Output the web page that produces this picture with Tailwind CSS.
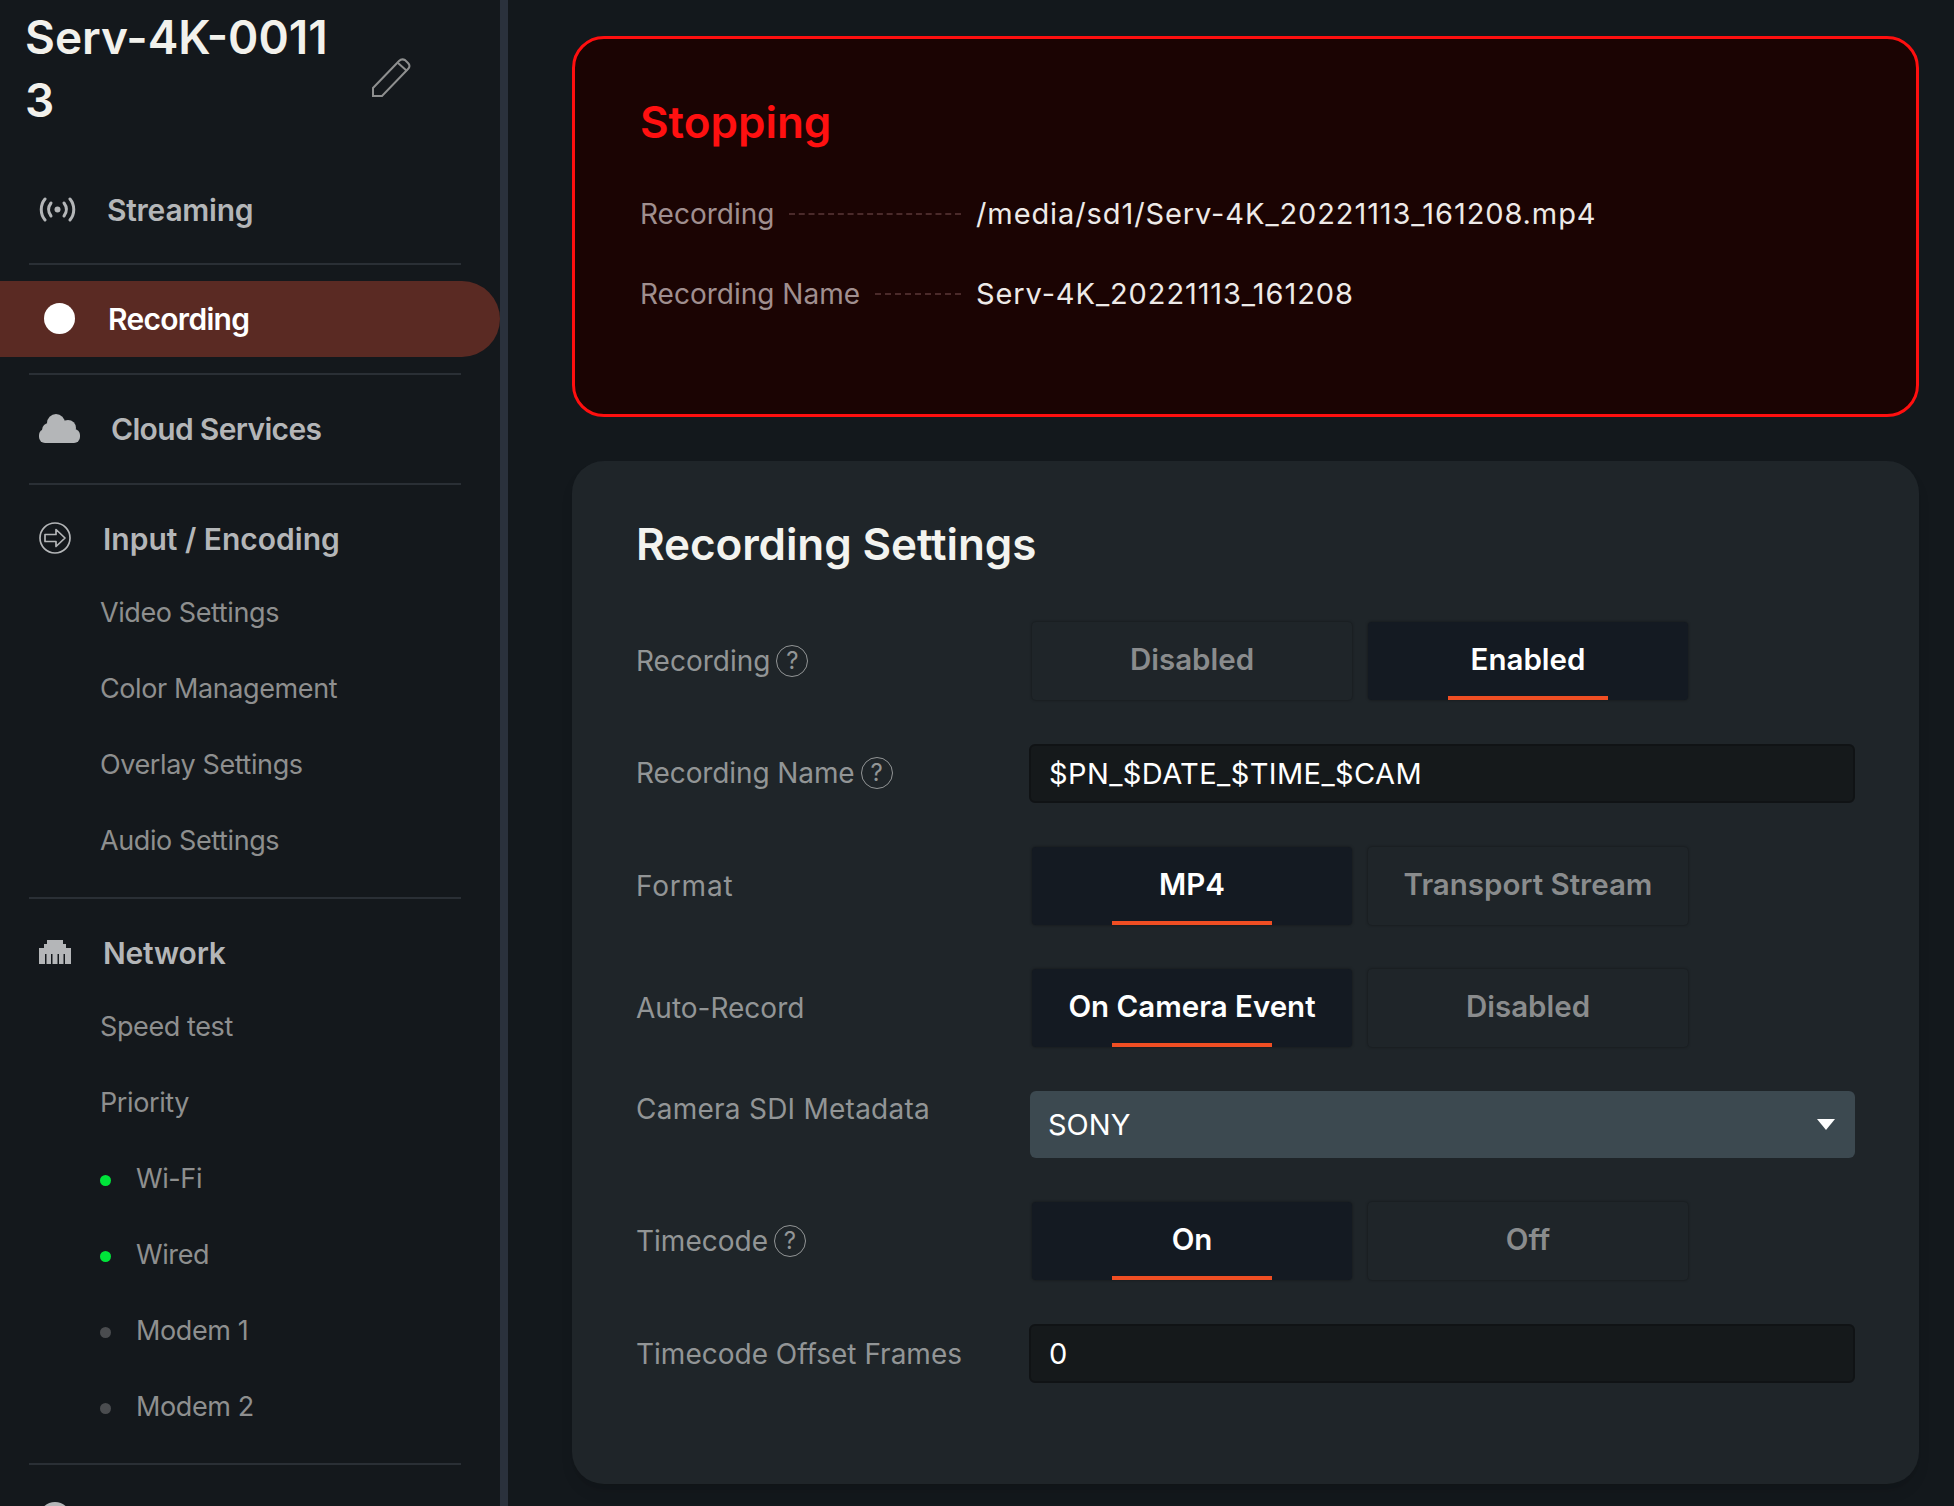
<!DOCTYPE html>
<html lang="en">
<head>
  <meta charset="UTF-8">
  <title>Recording Settings</title>
  <script src="https://cdn.jsdelivr.net/npm/@tailwindcss/browser@4"></script>
</head>
<body class="bg-[#13181c] [font-family:Inter,sans-serif] overflow-hidden">
  <div class="flex h-[1506px] w-[1954px] overflow-hidden">
    <!-- Sidebar -->
    <aside class="w-[508px] shrink-0 bg-[#14181c] border-r-8 border-[#2a313c] overflow-hidden">
      <div class="relative pl-[25px] pt-[6px] h-[172px] text-[46px] leading-[63px] font-semibold text-[#f2f1ec]">
        <div>Serv-4K-0011</div>
        <div>3</div>
        <svg class="absolute left-[371px] top-[58px] w-[40px] h-[40px] text-[#8e8f8f]" viewBox="0 0 40 40" fill="none" stroke="currentColor" stroke-width="2"><path d="M2 38v-8L28 3c2-2 4-2 6-1l3 3c2 2 2 4 0 6L11 38z"/><path d="M27 5l9 8"/></svg>
      </div>

      <div class="flex items-center h-[74px] pl-[39px] text-[30px] tracking-[-0.25px] font-semibold text-[#b4b6b8]">
        <svg class="w-[37px] h-[25px] mr-[31px]" viewBox="0 0 37 25" fill="none" stroke="currentColor" stroke-width="3" stroke-linecap="round"><path d="M6 2C1 8 1 17 6 23"/><path d="M12 6c-3 4-3 9 0 13"/><path d="M25 6c3 4 3 9 0 13"/><path d="M31 2c5 6 5 15 0 21"/><circle cx="18.500" cy="12.500" r="3" fill="currentColor" stroke="none"/></svg>
        <span class="pt-[3px]">Streaming</span>
      </div>
      <div class="h-[2px] ml-[29px] mt-[17px] mb-4 w-[432px] bg-[#2a2f35]"></div>

      <div class="flex items-center h-[76px] w-[500px] pl-[44px] rounded-r-[38px] bg-[#5a2a23] text-[30px] tracking-[-0.7px] font-semibold text-white">
        <span class="w-[31px] h-[31px] rounded-full bg-white mr-[33px] mb-[1px]"></span>
        <span class="pt-[1px]">Recording</span>
      </div>
      <div class="h-[2px] ml-[29px] my-4 w-[432px] bg-[#2a2f35]"></div>

      <div class="flex items-center h-[74px] pl-[39px] text-[30px] tracking-[-0.67px] font-semibold text-[#b4b6b8]">
        <svg class="w-[41px] h-[29px] mr-[31px]" viewBox="0 0 41 29" fill="currentColor"><circle cx="10" cy="16" r="7"/><circle cx="17" cy="9" r="9"/><circle cx="29" cy="14" r="8"/><rect y="15" width="41" height="14" rx="6"/></svg>
        <span class="pt-[3px]">Cloud Services</span>
      </div>
      <div class="h-[2px] ml-[29px] mt-[18px] mb-4 w-[432px] bg-[#2a2f35]"></div>

      <div class="flex items-center h-[74px] pl-[39px] text-[30px] font-semibold text-[#b4b6b8]">
        <svg class="w-[32px] h-[32px] mr-[32px]" viewBox="0 0 32 32" fill="none" stroke="currentColor" stroke-width="1.700"><circle cx="16" cy="16" r="15"/><path d="M6 12.500h11V7.500l9 8.500-9 8.500v-5H6z" stroke-linejoin="round"/></svg>
        <span class="pt-[3px]">Input / Encoding</span>
      </div>
      <ul class="text-[27px] tracking-[-0.4px] text-[#8e8f8f] pl-[100px]">
        <li class="flex items-center h-[76px]">Video Settings</li>
        <li class="flex items-center h-[76px]">Color Management</li>
        <li class="flex items-center h-[76px]">Overlay Settings</li>
        <li class="flex items-center h-[76px]">Audio Settings</li>
      </ul>
      <div class="h-[2px] ml-[29px] mt-[18px] mb-4 w-[432px] bg-[#2a2f35]"></div>

      <div class="flex items-center h-[74px] pl-[39px] text-[30px] tracking-[-0.2px] font-semibold text-[#b4b6b8]">
        <svg class="w-[32px] h-[24px] mr-[32px]" viewBox="0 0 32 24" fill="currentColor"><path d="M8 0h16v4h3v4h5v16H0V8h5V4h3z"/><path d="M6 14h1.500v10H6zM12 14h1.500v10H12zM18.500 14H20v10h-1.500zM24.500 14H26v10h-1.500z" fill="#14181c"/></svg>
        <span class="pt-[3px]">Network</span>
      </div>
      <ul class="text-[27px] tracking-[-0.4px] text-[#8e8f8f] pl-[100px]">
        <li class="flex items-center h-[76px]">Speed test</li>
        <li class="flex items-center h-[76px]">Priority</li>
        <li class="flex items-center h-[76px]"><span class="w-[11px] h-[11px] rounded-full bg-[#00e43a] mr-[25px] mt-[3px]"></span>Wi-Fi</li>
        <li class="flex items-center h-[76px]"><span class="w-[11px] h-[11px] rounded-full bg-[#00e43a] mr-[25px] mt-[3px]"></span>Wired</li>
        <li class="flex items-center h-[76px]"><span class="w-[11px] h-[11px] rounded-full bg-[#4a4c4f] mr-[25px] mt-[3px]"></span>Modem 1</li>
        <li class="flex items-center h-[76px]"><span class="w-[11px] h-[11px] rounded-full bg-[#4a4c4f] mr-[25px] mt-[3px]"></span>Modem 2</li>
      </ul>
      <div class="h-[2px] ml-[29px] mt-[18px] mb-[37px] w-[432px] bg-[#2a2f35]"></div>
      <div class="ml-[39px] w-[32px] h-[32px] rounded-full bg-[#b4b6b8]"></div>
    </aside>

    <!-- Main -->
    <main class="flex-1 pl-[64px] pr-[35px] pt-[36px]">
      <section class="h-[381px] border-[3px] border-[#ff0f0f] rounded-[32px] bg-[#1b0403] pl-[65px] pt-[56px]">
        <h2 class="text-[44px] leading-[54px] font-semibold text-[#ff1010]">Stopping</h2>
        <div class="flex items-center h-[40px] mt-[45px] text-[28px]">
          <div class="flex items-center w-[336px] text-[#a08f8f]">
            <span>Recording</span>
            <span class="flex-1 ml-[15px] mr-[15px] border-t-2 border-dashed border-[#4a2a2a]"></span>
          </div>
          <span class="text-[29px] tracking-[0.9px] text-[#eeeae8]">/media/sd1/Serv-4K_20221113_161208.mp4</span>
        </div>
        <div class="flex items-center h-[40px] mt-[40px] text-[28px]">
          <div class="flex items-center w-[336px] text-[#a08f8f]">
            <span>Recording Name</span>
            <span class="flex-1 ml-[15px] mr-[15px] border-t-2 border-dashed border-[#4a2a2a]"></span>
          </div>
          <span class="text-[29px] tracking-[0.9px] text-[#eeeae8]">Serv-4K_20221113_161208</span>
        </div>
      </section>

      <section class="mt-[44px] h-[1023px] rounded-[32px] bg-[#1f2529] pl-[64px] pt-[52px] shadow-lg">
        <h2 class="text-[44px] leading-[62px] tracking-[-0.1px] font-semibold text-[#f3f3ef]">Recording Settings</h2>
        <div class="mt-[47px] flex flex-col gap-[44px] text-[28px] text-[#929596]">
          <!-- Recording -->
          <div class="flex items-center">
            <div class="w-[393px] flex items-center gap-[6px]">Recording
              <span class="w-[32px] h-[32px] -mt-[1px] rounded-full border-[1.5px] border-[#929596] flex items-center justify-center text-[24px]">?</span>
            </div>
            <div class="flex gap-[16px] ml-[3px] text-[29.5px] font-semibold">
              <button class="w-[320px] h-[78px] pb-[3px] bg-[#1f2529] rounded shadow-[0_0_3px_rgba(0,0,0,0.45)] text-[#8a8c8d]">Disabled</button>
              <button class="relative w-[320px] h-[78px] pb-[3px] bg-[#141a22] rounded shadow-[0_0_3px_rgba(0,0,0,0.45)] text-white">Enabled<span class="absolute left-[80px] bottom-0 w-[160px] h-[4px] bg-[#f04e23]"></span></button>
            </div>
          </div>
          <!-- Recording Name -->
          <div class="flex items-center">
            <div class="w-[393px] flex items-center gap-[6px] -mt-[1px] -tracking-[0.1px]">Recording Name
              <span class="w-[32px] h-[32px] rounded-full border-[1.5px] border-[#929596] flex items-center justify-center text-[24px]">?</span>
            </div>
            <div class="w-[826px] h-[59px] flex items-center pl-[18px] bg-[#15191b] border-2 border-[#101315] rounded-md text-[29px] tracking-[0.4px] text-white">$PN_$DATE_$TIME_$CAM</div>
          </div>
          <!-- Format -->
          <div class="flex items-center">
            <div class="w-[393px] tracking-[0.8px]">Format</div>
            <div class="flex gap-[16px] ml-[3px] text-[29.5px] font-semibold">
              <button class="relative w-[320px] h-[78px] pb-[3px] bg-[#141a22] rounded shadow-[0_0_3px_rgba(0,0,0,0.45)] text-white">MP4<span class="absolute left-[80px] bottom-0 w-[160px] h-[4px] bg-[#f04e23]"></span></button>
              <button class="w-[320px] h-[78px] pb-[3px] bg-[#1f2529] rounded shadow-[0_0_3px_rgba(0,0,0,0.45)] text-[#8a8c8d]">Transport Stream</button>
            </div>
          </div>
          <!-- Auto-Record -->
          <div class="flex items-center">
            <div class="w-[393px]">Auto-Record</div>
            <div class="flex gap-[16px] ml-[3px] text-[29.5px] font-semibold">
              <button class="relative w-[320px] h-[78px] pb-[3px] bg-[#141a22] rounded shadow-[0_0_3px_rgba(0,0,0,0.45)] text-white">On Camera Event<span class="absolute left-[80px] bottom-0 w-[160px] h-[4px] bg-[#f04e23]"></span></button>
              <button class="w-[320px] h-[78px] pb-[3px] bg-[#1f2529] rounded shadow-[0_0_3px_rgba(0,0,0,0.45)] text-[#8a8c8d]">Disabled</button>
            </div>
          </div>
          <!-- Camera SDI Metadata -->
          <div class="flex items-start">
            <div class="w-[393px] -mt-[3px] tracking-[0.25px]">Camera SDI Metadata</div>
            <div class="w-[825px] h-[67px] ml-[1px] flex items-center justify-between pl-[18px] pr-[20px] bg-[#3c4950] rounded-md text-[29px] text-white">SONY
              <span class="w-0 h-0 border-x-[9px] border-x-transparent border-t-[11px] border-t-white"></span>
            </div>
          </div>
          <!-- Timecode -->
          <div class="flex items-center">
            <div class="w-[393px] flex items-center gap-[6px]">Timecode
              <span class="w-[32px] h-[32px] -mt-[1px] rounded-full border-[1.5px] border-[#929596] flex items-center justify-center text-[24px]">?</span>
            </div>
            <div class="flex gap-[16px] ml-[3px] text-[29.5px] font-semibold">
              <button class="relative w-[320px] h-[78px] pb-[3px] bg-[#141a22] rounded shadow-[0_0_3px_rgba(0,0,0,0.45)] text-white">On<span class="absolute left-[80px] bottom-0 w-[160px] h-[4px] bg-[#f04e23]"></span></button>
              <button class="w-[320px] h-[78px] pb-[3px] bg-[#1f2529] rounded shadow-[0_0_3px_rgba(0,0,0,0.45)] text-[#8a8c8d]">Off</button>
            </div>
          </div>
          <!-- Timecode Offset -->
          <div class="flex items-center">
            <div class="w-[393px]">Timecode Offset Frames</div>
            <div class="w-[826px] h-[59px] flex items-center pl-[18px] bg-[#15191b] border-2 border-[#101315] rounded-md text-[29px] text-white">0</div>
          </div>
        </div>
      </section>
    </main>
  </div>
</body>
</html>
